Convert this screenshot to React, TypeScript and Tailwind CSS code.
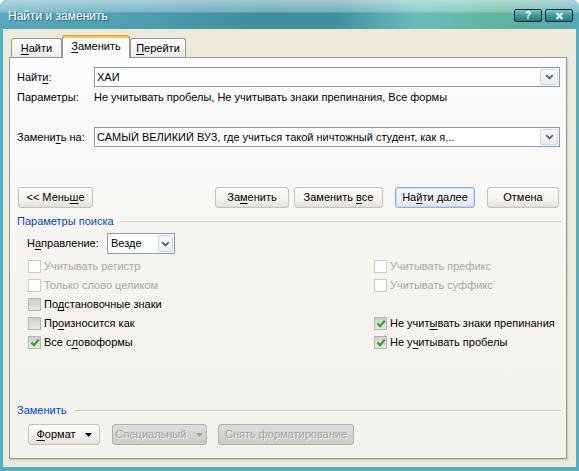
import React from "react";

// подчёркнутая буква (горячая клавиша)
function U({ children }: { children: React.ReactNode }) {
  return <span className="underline underline-offset-[2px]">{children}</span>;
}

function Chevron() {
  return (
    <svg width="9" height="6" viewBox="0 0 9 6">
      <path d="M1.2 1.2 L4.5 4.5 L7.8 1.2" stroke="#4d6185" strokeWidth="1.8" fill="none" />
    </svg>
  );
}

function DropBtn({ className = "" }: { className?: string }) {
  return (
    <span
      className={`flex items-center justify-center rounded-[2px] border border-[#d2d6dd] bg-[linear-gradient(to_bottom,#fbfbfb,#ececec)] ${className}`}
    >
      <Chevron />
    </span>
  );
}

function Combo({ value, className = "" }: { value: string; className?: string }) {
  return (
    <div className={`flex h-[20px] items-center border border-[#7f9db9] bg-white ${className}`}>
      <span className="flex-1 truncate pl-[2px]">{value}</span>
      <DropBtn className="mr-px h-[16px] w-[18px]" />
    </div>
  );
}

function Tri({ color }: { color: string }) {
  return (
    <svg width="7" height="4" viewBox="0 0 7 4" className="inline-block align-middle">
      <path d="M0 0 H7 L3.5 4 Z" fill={color} />
    </svg>
  );
}

function Btn({
  children,
  className = "",
  primary,
  disabled,
}: {
  children: React.ReactNode;
  className?: string;
  primary?: boolean;
  disabled?: boolean;
}) {
  const look = disabled
    ? "border-[#b0b0ac] bg-[linear-gradient(to_bottom,#dcdcda,#cacac7)] text-[#a3a3a0] [text-shadow:1px_1px_0_#f2f2f2]"
    : primary
      ? "border-[#8eb0dc] bg-[linear-gradient(to_bottom,#f7f9fd,#eceef3_70%,#dfe2e8)] shadow-[inset_0_0_0_1px_#c4d6f0]"
      : "border-[#c4c3bb] bg-[linear-gradient(to_bottom,#fcfcfa,#f1f0ea_65%,#e2e0d6)]";
  return (
    <div
      className={`flex h-[21px] items-center justify-center rounded-[3px] border ${look} ${className}`}
    >
      <span className="whitespace-pre">{children}</span>
    </div>
  );
}

function Check({
  children,
  state,
}: {
  children?: React.ReactNode;
  state: "off" | "on" | "disabled";
}) {
  const box =
    state === "disabled"
      ? "border-[#cdcdc8] bg-white"
      : "border-[#b4b4b0] bg-[linear-gradient(to_bottom,#cfcfcd,#e6e6e3)]";
  return (
    <div className="flex h-[19px] items-center">
      <span className={`flex h-[13px] w-[13px] items-center justify-center border ${box}`}>
        {state === "on" && (
          <svg width="10" height="9" viewBox="0 0 10 9">
            <path d="M1.5 4.6 L4 7.2 L8.8 1.6" stroke="#22a32a" strokeWidth="2.2" fill="none" />
          </svg>
        )}
      </span>
      <span className={`ml-[3px] ${state === "disabled" ? "text-[#aca899]" : "text-black"}`}>
        {children}
      </span>
    </div>
  );
}

function GroupLabel({ children, lineGap }: { children: React.ReactNode; lineGap: string }) {
  return (
    <div className="flex h-[14px] items-center pl-[7px] pr-[5px]">
      <span className="text-[#0046d5]">{children}</span>
      <span className={`h-px flex-1 bg-[#d0d0bf] ${lineGap}`} />
    </div>
  );
}

export default function App() {
  return (
    <div className="h-[471px] w-[579px] bg-white font-['Liberation_Sans',Arial,sans-serif] text-[11px] leading-none text-black">
      <div className="flex h-full flex-col overflow-hidden rounded-t-[7px] bg-[#55adc0]">
        {/* заголовок окна */}
        <div className="flex h-[29px] bg-[linear-gradient(to_bottom,rgba(255,255,255,0.5)_0%,rgba(255,255,255,0.28)_40%,rgba(255,255,255,0)_46%),linear-gradient(to_right,#58a9bb_0%,#4c9db0_25%,#3e8e9e_45%,#3f919f_58%,#68bcb9_72%,#5fb49c_86%,#52a9b6_100%)]">
          <span className="ml-[8px] mt-[10px] text-[12px] text-white [text-shadow:1px_1px_1px_rgba(0,40,50,0.55)]">
            Найти и заменить
          </span>
          <div className="ml-auto mr-[6px] mt-[9px] flex gap-[3px]">
            <div className="flex h-[13px] w-[28px] items-center justify-center rounded-[2px] border border-[#1a2a2c] bg-[linear-gradient(to_bottom,#7fc4c6,#3c9a9d_50%,#1f7b80)] text-[10px] font-bold text-white">
              ?
            </div>
            <div className="flex h-[13px] w-[28px] items-center justify-center rounded-[2px] border border-[#1a2a2c] bg-[linear-gradient(to_bottom,#7fc4c6,#3c9a9d_50%,#1f7b80)]">
              <svg width="9" height="8" viewBox="0 0 9 8">
                <path d="M1.5 1 L7.5 7 M7.5 1 L1.5 7" stroke="#fff" strokeWidth="2" />
              </svg>
            </div>
          </div>
        </div>

        {/* клиентская область */}
        <div className="mx-[3px] mb-[4px] flex-1 bg-[#ece9d8] pl-[6px] pt-[6px]">
          {/* вкладки */}
          <div className="relative z-10 flex h-[22px] items-end pl-[2px]">
            <div className="flex h-[19px] w-[51px] items-center justify-center rounded-t-[3px] border-x border-t border-[#919b9c] bg-[linear-gradient(to_bottom,#ffffff,#ecebe6)] pt-px">
              <U>Н</U>айти
            </div>
            <div className="-mb-px flex h-[23px] w-[68px] items-center justify-center rounded-t-[3px] border-x border-t border-[#919b9c] border-t-[#e3a23a] bg-[#fcfcfe] pb-[2px] shadow-[inset_0_2px_0_#ffc73c]">
              <U>З</U>аменить
            </div>
            <div className="flex h-[19px] w-[56px] items-center justify-center rounded-t-[3px] border-x border-t border-[#919b9c] bg-[linear-gradient(to_bottom,#ffffff,#ecebe6)] pt-px">
              <U>П</U>ерейти
            </div>
          </div>

          {/* панель вкладки */}
          <div className="flex h-[402px] w-[558px] flex-col border border-[#919b9c] bg-[linear-gradient(to_bottom,#fcfcfe,#f4f3ee_55%,#f3f2ec)] shadow-[1px_1px_0_#d2cfbe,2px_2px_0_#e2dfcf]">
            <div className="mt-[9px] flex h-[20px] items-center pl-[7px]">
              <span className="w-[77px]">
                Найт<U>и</U>:
              </span>
              <Combo value="ХАИ" className="w-[466px]" />
            </div>
            <div className="flex h-[20px] items-center pl-[7px]">
              <span className="w-[77px]">Параметры:</span>
              <span>Не учитывать пробелы, Не учитывать знаки препинания, Все формы</span>
            </div>
            <div className="mt-[20px] flex h-[20px] items-center pl-[7px]">
              <span className="w-[77px]">
                Замени<U>т</U>ь на:
              </span>
              <Combo
                value="САМЫЙ ВЕЛИКИЙ ВУЗ, где учиться такой ничтожный студент, как я..."
                className="w-[466px]"
              />
            </div>

            <div className="mt-[40px] flex">
              <Btn className="ml-[8px] w-[75px]">
                &lt;&lt; Мень<U>ш</U>е
              </Btn>
              <Btn className="ml-[122px] w-[74px]">
                За<U>м</U>енить
              </Btn>
              <Btn className="ml-[5px] w-[89px]">
                Заменить <U>в</U>се
              </Btn>
              <Btn primary className="ml-[12px] w-[80px]">
                На<U>й</U>ти далее
              </Btn>
              <Btn className="ml-[12px] w-[72px]">Отмена</Btn>
            </div>

            <div className="mt-[6px]">
              <GroupLabel lineGap="ml-[6px]">Параметры поиска</GroupLabel>
            </div>

            <div className="mt-[5px] flex h-[21px] items-center pl-[17px]">
              <span className="w-[80px]">
                Н<U>а</U>правление:
              </span>
              <div className="flex h-[21px] w-[68px] items-center border border-[#7f9db9] bg-white">
                <span className="flex-1 pl-[3px]">Везде</span>
                <DropBtn className="mr-px h-[17px] w-[15px]" />
              </div>
            </div>

            <div className="mt-[3px] grid grid-cols-[346px_1fr] pl-[18px]">
              <Check state="disabled">Учитывать регистр</Check>
              <Check state="disabled">Учитывать префикс</Check>
              <Check state="disabled">Только слово целиком</Check>
              <Check state="disabled">Учитывать суффикс</Check>
              <Check state="off">
                По<U>д</U>становочные знаки
              </Check>
              <div />
              <Check state="off">
                Пр<U>о</U>износится как
              </Check>
              <Check state="on">
                Не учит<U>ы</U>вать знаки препинания
              </Check>
              <Check state="on">
                Все с<U>л</U>овоформы
              </Check>
              <Check state="on">
                Не у<U>ч</U>итывать пробелы
              </Check>
            </div>

            <div className="mt-[51px]">
              <GroupLabel lineGap="ml-[8px]">Заменить</GroupLabel>
            </div>

            <div className="mt-[7px] flex">
              <Btn className="ml-[18px] w-[72px]">
                <U>Ф</U>ормат<span className="ml-[9px]"><Tri color="#000" /></span>
              </Btn>
              <Btn disabled className="ml-[12px] w-[95px]">
                Специальный<span className="ml-[10px]"><Tri color="#a3a3a0" /></span>
              </Btn>
              <Btn disabled className="ml-[11px] w-[136px]">
                Снять форматирование
              </Btn>
            </div>
          </div>
        </div>
      </div>
    </div>
  );
}
